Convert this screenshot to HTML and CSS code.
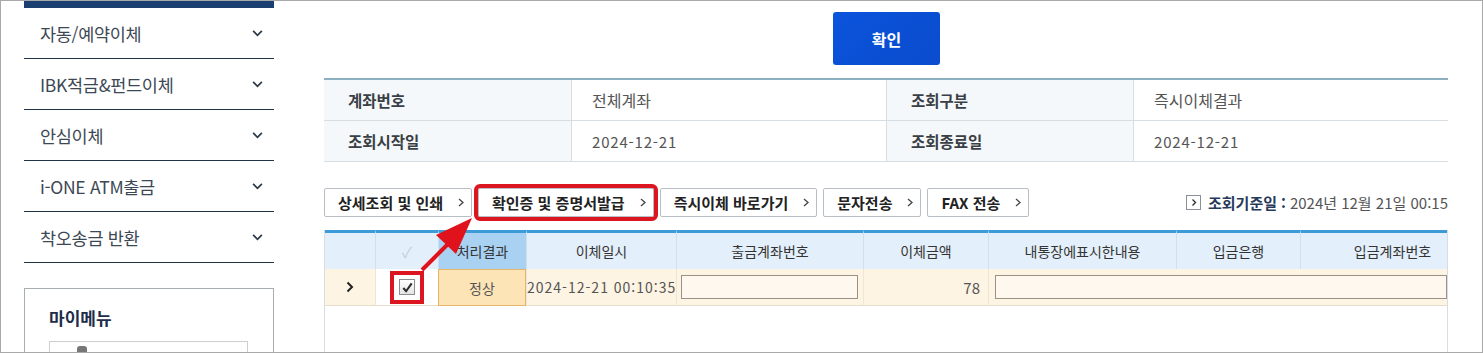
FILE: index.html
```html
<!DOCTYPE html>
<html lang="ko">
<head>
<meta charset="utf-8">
<link rel="stylesheet" href="styles.css">
</head>
<body>
<div class="frame">
  <aside class="sidebar">
    <div class="side-top"></div>
    <ul class="menu">
      <li class="menu-item"><span>자동/예약이체</span><svg class="chev" viewBox="0 0 12 8"><polyline points="1,1 6,6 11,1"/></svg></li>
      <li class="menu-item"><span>IBK적금&amp;펀드이체</span><svg class="chev" viewBox="0 0 12 8"><polyline points="1,1 6,6 11,1"/></svg></li>
      <li class="menu-item"><span>안심이체</span><svg class="chev" viewBox="0 0 12 8"><polyline points="1,1 6,6 11,1"/></svg></li>
      <li class="menu-item"><span>i-ONE ATM출금</span><svg class="chev" viewBox="0 0 12 8"><polyline points="1,1 6,6 11,1"/></svg></li>
      <li class="menu-item"><span>착오송금 반환</span><svg class="chev" viewBox="0 0 12 8"><polyline points="1,1 6,6 11,1"/></svg></li>
    </ul>
    <div class="mymenu">
      <h3 class="mymenu-title">마이메뉴</h3>
      <div class="mymenu-inner"><span class="mm-icon"></span></div>
    </div>
  </aside>

  <main class="main">
    <div class="btn-row"><button class="btn-ok">확인</button></div>

    <div class="info">
      <div class="info-row">
        <div class="info-label">계좌번호</div>
        <div class="info-value">전체계좌</div>
        <div class="info-label">조회구분</div>
        <div class="info-value">즉시이체결과</div>
      </div>
      <div class="info-row">
        <div class="info-label">조회시작일</div>
        <div class="info-value num">2024-12-21</div>
        <div class="info-label">조회종료일</div>
        <div class="info-value num">2024-12-21</div>
      </div>
    </div>

    <div class="toolbar">
      <div class="tools">
        <button class="tbtn">상세조회 및 인쇄<svg class="tchev" viewBox="0 0 6 9"><polyline points="1,1 5,4.5 1,8"/></svg></button>
        <button class="tbtn tbtn-mark">확인증 및 증명서발급<svg class="tchev" viewBox="0 0 6 9"><polyline points="1,1 5,4.5 1,8"/></svg></button>
        <button class="tbtn">즉시이체 바로가기<svg class="tchev" viewBox="0 0 6 9"><polyline points="1,1 5,4.5 1,8"/></svg></button>
        <button class="tbtn">문자전송<svg class="tchev" viewBox="0 0 6 9"><polyline points="1,1 5,4.5 1,8"/></svg></button>
        <button class="tbtn">FAX 전송<svg class="tchev" viewBox="0 0 6 9"><polyline points="1,1 5,4.5 1,8"/></svg></button>
      </div>
      <div class="basis">
        <span class="basis-icon"><svg viewBox="0 0 6 9"><polyline points="1.5,1.5 4.5,4.5 1.5,7.5"/></svg></span>
        <b class="basis-label">조회기준일</b><b class="basis-colon">:</b>
        <span class="basis-val">2024년 12월 21일 00:15</span>
      </div>
    </div>

    <div class="grid">
      <div class="gh"></div>
      <div class="gh gh-check">✓</div>
      <div class="gh gh-sel">처리결과</div>
      <div class="gh">이체일시</div>
      <div class="gh">출금계좌번호</div>
      <div class="gh">이체금액</div>
      <div class="gh">내통장에표시한내용</div>
      <div class="gh">입금은행</div>
      <div class="gh">입금계좌번호</div>

      <div class="gd gd-exp">
        <svg class="exp" viewBox="0 0 8 12"><polyline points="1.5,1.5 6,6 1.5,10.5"/></svg>
      </div>
      <div class="gd gd-white">
        <span class="cb-mark"><span class="cb"><svg viewBox="0 0 14 14"><path d="M2.5 7.5 L5.5 11 L11.5 2.5"/></svg></span></span>
      </div>
      <div class="gd gd-status">정상</div>
      <div class="gd gd-date">2024-12-21 00:10:35</div>
      <div class="gd"><span class="cell-input"></span></div>
      <div class="gd gd-amt">78</div>
      <div class="gd gd-span"><span class="cell-input long"></span></div>
    </div>

    <svg class="arrow" viewBox="0 0 80 70" width="80" height="70">
      <line x1="8" y1="56" x2="34" y2="30" />
      <polygon points="58,4 22,21 42,40" />
    </svg>
  </main>
</div>
</body>
</html>
```

FILE: styles.css
```css
* { box-sizing: border-box; margin: 0; padding: 0; }
html, body { width: 1483px; height: 353px; overflow: hidden; background: #fff; }
body { font-family: "Noto Sans CJK KR", "Noto Sans", sans-serif; color: #333; }

.frame {
  width: 1483px; height: 353px;
  border: 1px solid #a9a9a9;
  display: flex;
  overflow: hidden;
}

/* sidebar */
.sidebar { width: 250px; margin-left: 23px; flex: none; }
.side-top { height: 7px; background: #1c3f72; }
.menu { list-style: none; }
.menu-item {
  height: 51px;
  border-bottom: 1px solid #1f3447;
  display: flex; align-items: center; justify-content: space-between;
  padding: 0 11px 0 16px;
  font-size: 17.5px; color: #3d4855;
  letter-spacing: -0.3px;
}
.chev { width: 11px; height: 7px; fill: none; stroke: #2b3846; stroke-width: 2; }

.mymenu {
  margin-top: 25px;
  border: 1px solid #a8adb2;
  height: 80px;
  padding: 16px 25px 0 24px;
}
.mymenu-title { font-size: 17px; font-weight: 700; color: #1e2d48; line-height: 26px; }
.mymenu-inner {
  margin-top: 10px;
  height: 40px;
  border: 1px solid #cfcfcf;
  border-bottom: none;
  position: relative;
}
.mm-icon {
  position: absolute; left: 27px; top: 4px;
  width: 10px; height: 6px; background: #777; border-radius: 3px 3px 0 0;
}

/* main */
.main { width: 1124px; margin-left: 50px; flex: none; position: relative; }
.btn-row { display: flex; justify-content: center; padding-top: 11px; }
.btn-ok {
  width: 107px; height: 53px;
  border: none; border-radius: 3px;
  background: linear-gradient(135deg, #0b55dc 0%, #0a4fd4 50%, #0b4ccf 100%);
  color: #fff; font-family: inherit; font-size: 16px; font-weight: 700;
  margin-left: 1px;
}

.info { margin-top: 13px; border-top: 2px solid #8cb0bf; }
.info-row {
  display: grid;
  grid-template-columns: 247px 315px 247px 315px;
  height: 41px;
  border-bottom: 1px solid #d6dee4;
}
.info-label {
  background: #f4f8fb;
  display: flex; align-items: center;
  padding-left: 24px;
  font-size: 15.5px; font-weight: 700; color: #3a3f45;
}
.info-value {
  display: flex; align-items: center;
  padding-left: 20px;
  font-size: 16px; color: #555;
  border-left: 1px solid #d6dee4;
}
.info-value.num { font-size: 15px; letter-spacing: 0.8px; }
.info-row .info-label:nth-child(3) { border-left: 1px solid #d6dee4; }

.toolbar {
  margin-top: 26px;
  display: flex; justify-content: space-between; align-items: center;
  height: 29px;
}
.tools { display: flex; gap: 6px; }
.tbtn {
  height: 29px;
  display: flex; align-items: center; gap: 15px;
  padding: 0 7px 0 13px;
  border: 1px solid #b9bec4; border-radius: 2px;
  background: #fff;
  font-family: inherit; font-size: 15px; font-weight: 700; color: #222;
}
.tchev { width: 6px; height: 9px; fill: none; stroke: #444; stroke-width: 1.3; }
.tbtn-mark { outline: 4px solid #dc1620; outline-offset: 0; }

.basis { display: flex; align-items: center; font-size: 15px; color: #555; }
.basis-icon {
  width: 15px; height: 15px; border: 1px solid #8b9096;
  display: flex; align-items: center; justify-content: center;
  margin-right: 7px;
}
.basis-icon svg { width: 6px; height: 9px; fill: none; stroke: #333; stroke-width: 1.4; }
.basis-label { color: #26395a; font-weight: 700; }
.basis-colon { color: #26395a; margin: 0 4px 0 4px; }

/* grid */
.grid {
  margin-top: 13px;
  display: grid;
  grid-template-columns: 50px 63px 88px 150px 187px 125px 188px 124px 184px;
  grid-template-rows: 39px 37px;
  height: 140px;
  width: 1124px;
  border-left: 1px solid #d8dde2;
  border-right: 1px solid #d8dde2;
  overflow: hidden;
  align-content: start;
}
.gh {
  background: #e3effa;
  border-top: 3px solid #3d9cd8;
  border-left: 1px solid #cfe0ef;
  display: flex; align-items: center; justify-content: center;
  font-size: 14px; color: #333;
}
.gh:first-child { border-left: none; }
.gh-check { color: #c9cdd2; font-size: 15px; background: #e3effa; }
.gh-sel { background: #a9d1f2; }

.gd {
  background: #fdf4e4;
  border-left: 1px solid #f0e6d4;
  border-bottom: 1px solid #e6ddcd;
  display: flex; align-items: center;
  font-size: 14px; color: #444;
}
.gd-exp { border-left: none; justify-content: center; }
.exp { width: 8px; height: 12px; fill: none; stroke: #222; stroke-width: 2; }
.gd-white { background: #fff; justify-content: center; }
.cb-mark {
  width: 34px; height: 33px;
  border: 4px solid #dc1620;
  display: flex; align-items: center; justify-content: center;
}
.cb {
  width: 16px; height: 16px;
  border: 1px solid #8d8d8d;
  background: linear-gradient(#fff, #e4e4e4);
  display: flex; align-items: center; justify-content: center;
}
.cb svg { width: 13px; height: 13px; fill: none; stroke: #2a2a2a; stroke-width: 2.2; }
.gd-status {
  background: #fde4b7;
  border: 1px solid #e2b56a;
  justify-content: center;
  color: #555;
}
.gd-date { white-space: nowrap; overflow: visible; padding-left: 0; color: #555; letter-spacing: 1px; font-size: 14px; }
.cell-input {
  display: block;
  width: 177px; height: 24px;
  margin-left: 4px;
  background: #fff8ee;
  border: 1px solid #9a9186;
}
.gd-amt { justify-content: flex-end; padding-right: 8px; color: #555; font-size: 15px; }
.gd-span { grid-column: 7 / 10; }
.cell-input.long { width: 452px; margin-left: 6px; }

/* annotation arrow */
.arrow {
  position: absolute;
  left: 90px; top: 213px;
  overflow: visible;
}
.arrow line { stroke: #e0121c; stroke-width: 4; }
.arrow polygon { fill: #e0121c; }
```
